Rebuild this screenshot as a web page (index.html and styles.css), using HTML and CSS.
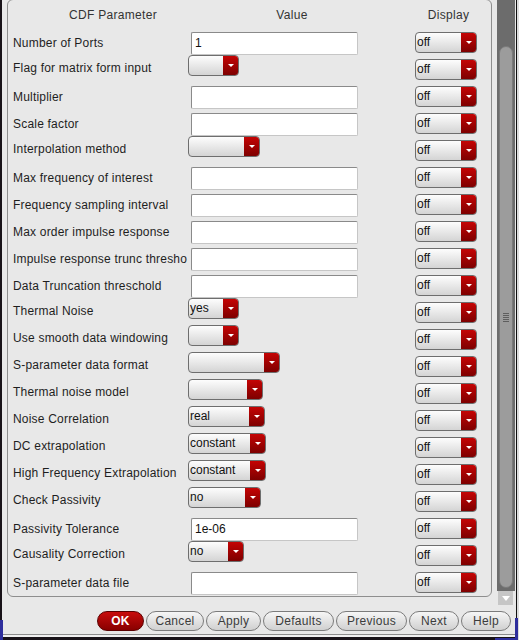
FILE: index.html
```html
<!DOCTYPE html>
<html>
<head>
<meta charset="utf-8">
<title>CDF Parameters</title>
<link rel="stylesheet" href="styles.css">
</head>
<body>
<div class="window">
  <div class="main">
    <div class="panel">
      <div class="header">
        <span class="h-param">CDF Parameter</span>
        <span class="h-value">Value</span>
        <span class="h-display">Display</span>
      </div>

      <div class="row row-input">
        <span class="label">Number of Ports</span>
        <div class="value"><input class="field" type="text" value="1"></div>
        <div class="display"><div class="select"><span class="select-text">off</span><span class="select-arrow"></span></div></div>
      </div>
      <div class="row row-select">
        <span class="label">Flag for matrix form input</span>
        <div class="value"><div class="select w51"><span class="select-text"></span><span class="select-arrow"></span></div></div>
        <div class="display"><div class="select"><span class="select-text">off</span><span class="select-arrow"></span></div></div>
      </div>
      <div class="row row-input">
        <span class="label">Multiplier</span>
        <div class="value"><input class="field" type="text" value=""></div>
        <div class="display"><div class="select"><span class="select-text">off</span><span class="select-arrow"></span></div></div>
      </div>
      <div class="row row-input">
        <span class="label">Scale factor</span>
        <div class="value"><input class="field" type="text" value=""></div>
        <div class="display"><div class="select"><span class="select-text">off</span><span class="select-arrow"></span></div></div>
      </div>
      <div class="row row-select">
        <span class="label">Interpolation method</span>
        <div class="value"><div class="select w72"><span class="select-text"></span><span class="select-arrow"></span></div></div>
        <div class="display"><div class="select"><span class="select-text">off</span><span class="select-arrow"></span></div></div>
      </div>
      <div class="row row-input">
        <span class="label">Max frequency of interest</span>
        <div class="value"><input class="field" type="text" value=""></div>
        <div class="display"><div class="select"><span class="select-text">off</span><span class="select-arrow"></span></div></div>
      </div>
      <div class="row row-input">
        <span class="label">Frequency sampling interval</span>
        <div class="value"><input class="field" type="text" value=""></div>
        <div class="display"><div class="select"><span class="select-text">off</span><span class="select-arrow"></span></div></div>
      </div>
      <div class="row row-input">
        <span class="label">Max order impulse response</span>
        <div class="value"><input class="field" type="text" value=""></div>
        <div class="display"><div class="select"><span class="select-text">off</span><span class="select-arrow"></span></div></div>
      </div>
      <div class="row row-input">
        <span class="label">Impulse response trunc thresho</span>
        <div class="value"><input class="field" type="text" value=""></div>
        <div class="display"><div class="select"><span class="select-text">off</span><span class="select-arrow"></span></div></div>
      </div>
      <div class="row row-input">
        <span class="label">Data Truncation threschold</span>
        <div class="value"><input class="field" type="text" value=""></div>
        <div class="display"><div class="select"><span class="select-text">off</span><span class="select-arrow"></span></div></div>
      </div>
      <div class="row row-select">
        <span class="label">Thermal Noise</span>
        <div class="value"><div class="select w51"><span class="select-text">yes</span><span class="select-arrow"></span></div></div>
        <div class="display"><div class="select"><span class="select-text">off</span><span class="select-arrow"></span></div></div>
      </div>
      <div class="row row-select">
        <span class="label">Use smooth data windowing</span>
        <div class="value"><div class="select w51"><span class="select-text"></span><span class="select-arrow"></span></div></div>
        <div class="display"><div class="select"><span class="select-text">off</span><span class="select-arrow"></span></div></div>
      </div>
      <div class="row row-select">
        <span class="label">S-parameter data format</span>
        <div class="value"><div class="select w92"><span class="select-text"></span><span class="select-arrow"></span></div></div>
        <div class="display"><div class="select"><span class="select-text">off</span><span class="select-arrow"></span></div></div>
      </div>
      <div class="row row-select">
        <span class="label">Thermal noise model</span>
        <div class="value"><div class="select w75"><span class="select-text"></span><span class="select-arrow"></span></div></div>
        <div class="display"><div class="select"><span class="select-text">off</span><span class="select-arrow"></span></div></div>
      </div>
      <div class="row row-select">
        <span class="label">Noise Correlation</span>
        <div class="value"><div class="select w77"><span class="select-text">real</span><span class="select-arrow"></span></div></div>
        <div class="display"><div class="select"><span class="select-text">off</span><span class="select-arrow"></span></div></div>
      </div>
      <div class="row row-select">
        <span class="label">DC extrapolation</span>
        <div class="value"><div class="select w78"><span class="select-text">constant</span><span class="select-arrow"></span></div></div>
        <div class="display"><div class="select"><span class="select-text">off</span><span class="select-arrow"></span></div></div>
      </div>
      <div class="row row-select">
        <span class="label">High Frequency Extrapolation</span>
        <div class="value"><div class="select w78"><span class="select-text">constant</span><span class="select-arrow"></span></div></div>
        <div class="display"><div class="select"><span class="select-text">off</span><span class="select-arrow"></span></div></div>
      </div>
      <div class="row row-select">
        <span class="label">Check Passivity</span>
        <div class="value"><div class="select w73"><span class="select-text">no</span><span class="select-arrow"></span></div></div>
        <div class="display"><div class="select"><span class="select-text">off</span><span class="select-arrow"></span></div></div>
      </div>
      <div class="row row-input">
        <span class="label">Passivity Tolerance</span>
        <div class="value"><input class="field" type="text" value="1e-06"></div>
        <div class="display"><div class="select"><span class="select-text">off</span><span class="select-arrow"></span></div></div>
      </div>
      <div class="row row-select">
        <span class="label">Causality Correction</span>
        <div class="value"><div class="select w56"><span class="select-text">no</span><span class="select-arrow"></span></div></div>
        <div class="display"><div class="select"><span class="select-text">off</span><span class="select-arrow"></span></div></div>
      </div>
      <div class="row row-input">
        <span class="label">S-parameter data file</span>
        <div class="value"><input class="field" type="text" value=""></div>
        <div class="display"><div class="select"><span class="select-text">off</span><span class="select-arrow"></span></div></div>
      </div>
    </div>

    <div class="scrollbar">
      <div class="track"><div class="thumb"><span class="grip"></span></div></div>
      <div class="arrow-down"></div>
    </div>
  </div>

  <div class="buttons">
    <button class="btn btn-ok">OK</button>
    <button class="btn btn-cancel">Cancel</button>
    <button class="btn btn-apply">Apply</button>
    <button class="btn btn-defaults">Defaults</button>
    <button class="btn btn-previous">Previous</button>
    <button class="btn btn-next">Next</button>
    <button class="btn btn-help">Help</button>
  </div>
</div>
</body>
</html>
```

FILE: styles.css
```css
* { box-sizing: border-box; }

html, body {
  margin: 0;
  padding: 0;
}

body {
  width: 519px;
  height: 640px;
  overflow: hidden;
  background: linear-gradient(to left, #dcdcdc 0 2px, #181218 2px);
  font-family: "Liberation Sans", Arial, sans-serif;
  font-size: 12px;
  color: #1e1e1e;
}

.window {
  position: relative;
  margin-left: 2px;
  width: 515px;
  height: 635px;
  background: #e8e8e8;
  border-right: 1px solid #101010;
  border-bottom: 1px solid #8c8c8c;
  box-shadow: 0 2px 0 #f0f0f0;
  display: flex;
  flex-direction: column;
}

/* window-manager resize corners (drawn over the frame) */
.window::before {
  content: "";
  position: absolute;
  left: -2px;
  top: 620px;
  width: 22px;
  height: 20px;
  border-left: 3px solid #2e2e9c;
  border-bottom: 4px solid #2e2e9c;
}

.window::after {
  content: "";
  position: absolute;
  left: 493px;
  top: 618px;
  width: 20px;
  height: 20px;
  border-right: 3px solid #2e2e9c;
  border-bottom: 3px solid #2e2e9c;
}

.main {
  display: flex;
  height: 605px;
}

/* ---------- panel ---------- */
.panel {
  margin-top: -1px;
  margin-left: 5px;
  width: 485px;
  height: 598px;
  border: 1px solid #8e8e8e;
  border-radius: 6px;
  flex: none;
}

.header {
  display: grid;
  grid-template-columns: 210px 148px 49px 67px;
  height: 32px;
  padding-top: 8px;
  line-height: 14px;
  color: #333;
  text-align: center;
  letter-spacing: 0.3px;
}

.h-display { grid-column: 4; }

.row {
  display: grid;
  grid-template-columns: 180px 227px 62px;
  height: 27px;
  align-items: start;
}

.label {
  padding-left: 5px;
  white-space: nowrap;
  overflow: hidden;
  line-height: 14px;
  letter-spacing: 0.2px;
}

.row-input .label { padding-top: 4px; }
.row-select .label { padding-top: 2px; }

/* ---------- text field ---------- */
.field {
  display: block;
  margin: 0 0 0 3px;
  width: 167px;
  height: 23px;
  border: 1px solid;
  border-color: #8a8a8a #c6c6c6 #c6c6c6 #8a8a8a;
  border-radius: 2px;
  background: #fff;
  font-family: "Liberation Sans", Arial, sans-serif;
  font-size: 12px;
  color: #111;
  padding: 0 3px 2px;
  outline: none;
}

/* ---------- drop-down ---------- */
.select {
  display: flex;
  height: 21px;
  border: 1px solid #6e6e6e;
  border-radius: 4px;
  overflow: hidden;
  background: linear-gradient(#fdfdfd, #d4d4d4);
}

.display .select { width: 62px; }
.value .select { margin-top: -4px; }

.w51 { width: 51px; }
.w56 { width: 56px; }
.w72 { width: 72px; }
.w73 { width: 73px; }
.w75 { width: 75px; }
.w77 { width: 77px; }
.w78 { width: 78px; }
.w92 { width: 92px; }

.select-text {
  flex: 1;
  padding-left: 1px;
  line-height: 19px;
  color: #111;
  white-space: nowrap;
  overflow: hidden;
}

.select-arrow {
  flex: none;
  width: 15px;
  background: linear-gradient(#c40404, #7e0000);
  display: flex;
  align-items: center;
  justify-content: center;
}

.select-arrow::after {
  content: "";
  border-left: 3px solid transparent;
  border-right: 3px solid transparent;
  border-top: 3px solid #fff;
}

/* ---------- scrollbar ---------- */
.scrollbar {
  margin-left: 5px;
  width: 18px;
  display: flex;
  flex-direction: column;
}

.track {
  height: 591px;
  background: #6c6c6c;
  padding: 46px 2px 3px;
}

.thumb {
  height: 100%;
  background: #9c9c9c;
  border: 1px solid #7a7a7a;
  border-radius: 7px;
  display: flex;
  align-items: center;
  justify-content: center;
}

.grip {
  width: 6px;
  height: 9px;
  background: repeating-linear-gradient(to bottom, #5e5e5e 0 1px, transparent 1px 2px);
}

.arrow-down {
  height: 14px;
  margin: 0 2px 0 1px;
  background: #c6c6c6;
  display: flex;
  align-items: center;
  justify-content: center;
}

.arrow-down::after {
  content: "";
  border-left: 4px solid transparent;
  border-right: 4px solid transparent;
  border-top: 5px solid #fff;
}

/* ---------- buttons ---------- */
.buttons {
  display: flex;
  justify-content: flex-end;
  gap: 2px;
  padding-right: 5px;
  margin-top: 6px;
}

.btn {
  height: 20px;
  padding: 0;
  border: 1px solid #7b7b7b;
  border-radius: 10px;
  background: linear-gradient(#f6f6f6, #d0d0d0);
  color: #3c3c3c;
  font-family: "Liberation Sans", Arial, sans-serif;
  font-size: 12px;
  line-height: 18px;
  letter-spacing: 0.3px;
  text-align: center;
}

.btn-ok {
  width: 47px;
  background: linear-gradient(#c80c0c, #880000);
  border-color: #5a0000;
  color: #fff;
  font-weight: bold;
}

.btn-cancel { width: 58px; }
.btn-apply { width: 55px; }
.btn-defaults { width: 71px; }
.btn-previous { width: 71px; }
.btn-next { width: 50px; }
.btn-help { width: 50px; }
```
